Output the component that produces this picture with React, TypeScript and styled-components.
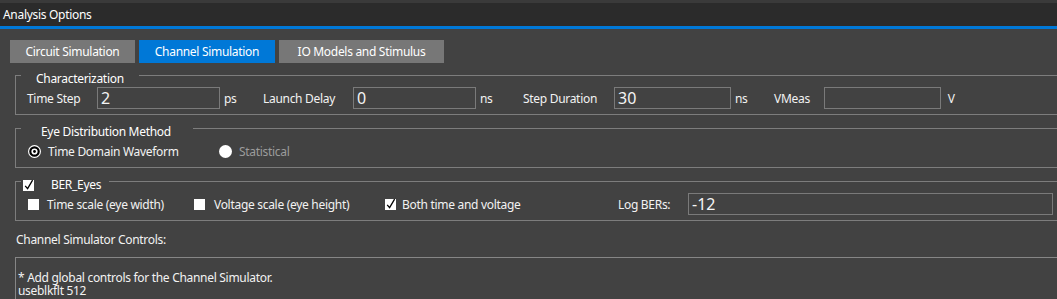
import React from "react";
import styled, { createGlobalStyle } from "styled-components";

const Global = createGlobalStyle`
    html, body {
        margin: 0;
        padding: 0;
        background: #424242;
    }
    body {
        font-family: "Noto Sans", "Open Sans", sans-serif;
        font-size: 12px;
        letter-spacing: -0.3px;
        color: #f2f2f2;
    }
`;

const Window = styled.div`
    width: 1057px;
    height: 299px;
    overflow: hidden;
    background: #424242;
`;

const TopStrip = styled.div`
    height: 3px;
    background: #3a3a3a;
`;

const TitleBar = styled.div`
    height: 23px;
    background: #2b2b2b;
    display: flex;
    align-items: center;
    padding-left: 3px;
    color: #ffffff;
    border-bottom: 3px solid #0078d7;
`;

const Body = styled.div`
    padding: 11px 0 0 15px;
    display: flex;
    flex-direction: column;
`;

const Tabs = styled.div`
    display: flex;
    gap: 4px;
    margin-left: -5px;
`;

const Tab = styled.div<{ $active?: boolean; $w: number }>`
    width: ${(p) => p.$w}px;
    height: 23px;
    display: flex;
    align-items: center;
    justify-content: center;
    background: ${(p) => (p.$active ? "#0078d7" : "#777777")};
    color: #ffffff;
`;

const Group = styled.fieldset<{ $top?: number }>`
    margin: ${(p) => p.$top ?? 1}px -20px 0 0;
    padding: 0 0 5px 0;
    border: 1px solid #7d7d7d;
    min-width: 0;
`;

const Legend = styled.legend<{ $pl: number; $pr: number }>`
    margin-left: 5px;
    padding: 8px ${(p) => p.$pr}px 0 ${(p) => p.$pl}px;
    line-height: 16px;
    height: 16px;
    display: flex;
    align-items: center;
    color: #ffffff;
`;

const Row = styled.div<{ $pl: number }>`
    display: flex;
    align-items: center;
    height: 22px;
    padding-left: ${(p) => p.$pl}px;
`;

const Label = styled.span<{ $w: number; $muted?: boolean }>`
    width: ${(p) => p.$w}px;
    flex: none;
    white-space: nowrap;
    color: ${(p) => (p.$muted ? "#9c9c9c" : "#f2f2f2")};
`;

const Unit = styled.span<{ $w: number }>`
    width: ${(p) => p.$w}px;
    flex: none;
    padding-left: 4px;
    box-sizing: border-box;
`;

const Input = styled.div<{ $w: number }>`
    width: ${(p) => p.$w}px;
    height: 22px;
    box-sizing: border-box;
    flex: none;
    border: 1px solid #7a7a7a;
    padding-left: 3px;
    display: flex;
    align-items: center;
    font-size: 16px;
    letter-spacing: 0;
    color: #f4f4f4;
`;

const Option = styled.label<{ $w: number }>`
    width: ${(p) => p.$w}px;
    flex: none;
    display: flex;
    align-items: center;
    white-space: nowrap;
`;

const Mark = styled.span<{ $gap: number }>`
    display: inline-flex;
    margin-right: ${(p) => p.$gap}px;
`;

const Caption = styled.div`
    margin-top: 11px;
    line-height: 16px;
    margin-left: 1px;
`;

const TextArea = styled.div`
    margin: 9px -20px 0 0;
    border: 1px solid #868686;
    border-right: none;
    padding: 13px 0 0 2px;
    line-height: 13px;
    height: 60px;
    white-space: pre;
`;

const Radio = ({ on }: { on?: boolean }) => (
    <svg width="13" height="13" viewBox="0 0 13 13">
        <circle cx="6.5" cy="6.5" r="6.5" fill="#ffffff" />
        {on && <circle cx="6.5" cy="6.5" r="4.2" fill="none" stroke="#000" strokeWidth="2.2" />}
        {on && <circle cx="6.5" cy="6.5" r="1.4" fill="#000" />}
    </svg>
);

const Check = ({ on }: { on?: boolean }) => (
    <svg width="12" height="13" viewBox="0 0 12 13" style={{ overflow: "visible" }}>
        <rect x="0" y="1" width="11" height="11" fill="#ffffff" />
        {on && <path d="M2.2 6.8 L4.6 9.6 L9.6 1.2" fill="none" stroke="#000" strokeWidth="1.3" />}
    </svg>
);

const App = () => {
    return (
        <Window>
            <Global />
            <TopStrip />
            <TitleBar>Analysis Options</TitleBar>
            <Body>
                <Tabs>
                    <Tab $w={125}>Circuit Simulation</Tab>
                    <Tab $w={136} $active>Channel Simulation</Tab>
                    <Tab $w={165}>IO Models and Stimulus</Tab>
                </Tabs>

                <Group $top={0}>
                    <Legend $pl={15} $pr={15}>Characterization</Legend>
                    <Row $pl={11}>
                        <Label $w={70}>Time Step</Label>
                        <Input $w={123}>2</Input>
                        <Unit $w={43}>ps</Unit>
                        <Label $w={90}>Launch Delay</Label>
                        <Input $w={123}>0</Input>
                        <Unit $w={47}>ns</Unit>
                        <Label $w={91}>Step Duration</Label>
                        <Input $w={117}>30</Input>
                        <Unit $w={43}>ns</Unit>
                        <Label $w={50}>VMeas</Label>
                        <Input $w={117} />
                        <Unit $w={20}>&nbsp;V</Unit>
                    </Row>
                </Group>

                <Group>
                    <Legend $pl={20} $pr={22}>Eye Distribution Method</Legend>
                    <Row $pl={12}>
                        <Option $w={191}>
                            <Mark $gap={7}><Radio on /></Mark>
                            Time Domain Waveform
                        </Option>
                        <Option $w={200}>
                            <Mark $gap={7}><Radio /></Mark>
                            <Label $w={100} $muted>Statistical</Label>
                        </Option>
                    </Row>
                </Group>

                <Group>
                    <Legend $pl={2} $pr={8}>
                        <Mark $gap={16}><Check on /></Mark>
                        BER_Eyes
                    </Legend>
                    <Row $pl={12}>
                        <Option $w={166}>
                            <Mark $gap={7}><Check /></Mark>
                            Time scale (eye width)
                        </Option>
                        <Option $w={191}>
                            <Mark $gap={8}><Check /></Mark>
                            Voltage scale (eye height)
                        </Option>
                        <Option $w={233}>
                            <Mark $gap={5}><Check on /></Mark>
                            Both time and voltage
                        </Option>
                        <Label $w={70}>Log BERs:</Label>
                        <Input $w={365}>-12</Input>
                    </Row>
                </Group>

                <Caption>Channel Simulator Controls:</Caption>
                <TextArea>{"* Add global controls for the Channel Simulator.\nuseblkflt 512"}</TextArea>
            </Body>
        </Window>
    );
};

export default App;
